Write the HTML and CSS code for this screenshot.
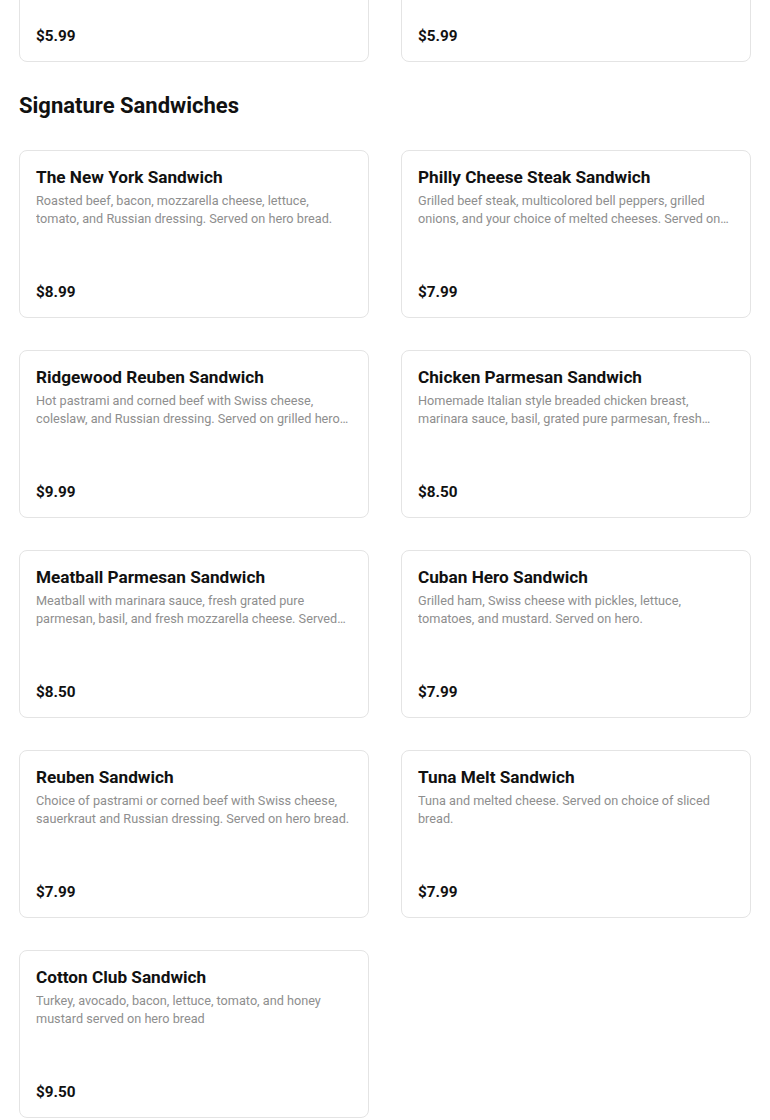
FILE: index.html
```html
<!DOCTYPE html>
<html lang="en">
  <head>
    <meta charset="UTF-8" />
    <meta name="viewport" content="width=device-width, initial-scale=1.0" />
    <title>Menu - Sandwiches</title>
    <link rel="stylesheet" href="styles.css">
  </head>
  <body>
    <div class="menu">
      <section class="menu-section menu-section--prev">
        <div class="item-grid">
          <div class="menu-item">
            <h3 class="item-name">Egg and Cheese Sandwich</h3>
            <p class="item-desc">Two eggs and American cheese served on a roll.</p>
            <div class="item-price">$5.99</div>
          </div>
          <div class="menu-item">
            <h3 class="item-name">Bacon, Egg and Cheese</h3>
            <p class="item-desc">Crispy bacon, eggs and American cheese served on a roll.</p>
            <div class="item-price">$5.99</div>
          </div>
        </div>
      </section>

      <section class="menu-section">
        <h2 class="section-title">Signature Sandwiches</h2>
        <div class="item-grid">
          <div class="menu-item">
            <h3 class="item-name">The New York Sandwich</h3>
            <p class="item-desc">Roasted beef, bacon, mozzarella cheese, lettuce, tomato, and Russian dressing. Served on hero bread.</p>
            <div class="item-price">$8.99</div>
          </div>
          <div class="menu-item">
            <h3 class="item-name">Philly Cheese Steak Sandwich</h3>
            <p class="item-desc">Grilled beef steak, multicolored bell peppers, grilled onions, and your choice of melted cheeses. Served on hero bread.</p>
            <div class="item-price">$7.99</div>
          </div>
          <div class="menu-item">
            <h3 class="item-name">Ridgewood Reuben Sandwich</h3>
            <p class="item-desc">Hot pastrami and corned beef with Swiss cheese, coleslaw, and Russian dressing. Served on grilled hero bread.</p>
            <div class="item-price">$9.99</div>
          </div>
          <div class="menu-item">
            <h3 class="item-name">Chicken Parmesan Sandwich</h3>
            <p class="item-desc">Homemade Italian style breaded chicken breast, marinara sauce, basil, grated pure parmesan, fresh mozzarella cheese. Served on hero.</p>
            <div class="item-price">$8.50</div>
          </div>
          <div class="menu-item">
            <h3 class="item-name">Meatball Parmesan Sandwich</h3>
            <p class="item-desc">Meatball with marinara sauce, fresh grated pure parmesan, basil, and fresh mozzarella cheese. Served on hero bread.</p>
            <div class="item-price">$8.50</div>
          </div>
          <div class="menu-item">
            <h3 class="item-name">Cuban Hero Sandwich</h3>
            <p class="item-desc">Grilled ham, Swiss cheese with pickles, lettuce, tomatoes, and mustard. Served on hero.</p>
            <div class="item-price">$7.99</div>
          </div>
          <div class="menu-item">
            <h3 class="item-name">Reuben Sandwich</h3>
            <p class="item-desc">Choice of pastrami or corned beef with Swiss cheese, sauerkraut and Russian dressing. Served on hero bread.</p>
            <div class="item-price">$7.99</div>
          </div>
          <div class="menu-item">
            <h3 class="item-name">Tuna Melt Sandwich</h3>
            <p class="item-desc">Tuna and melted cheese. Served on choice of sliced bread.</p>
            <div class="item-price">$7.99</div>
          </div>
          <div class="menu-item">
            <h3 class="item-name">Cotton Club Sandwich</h3>
            <p class="item-desc">Turkey, avocado, bacon, lettuce, tomato, and honey mustard served on hero bread</p>
            <div class="item-price">$9.50</div>
          </div>
        </div>
      </section>
    </div>
  </body>
</html>
```

FILE: styles.css
```css
* {
  margin: 0;
  padding: 0;
  box-sizing: border-box;
}

body {
  font-family: Roboto, "Liberation Sans", sans-serif;
  background: #ffffff;
  color: #111111;
  overflow: hidden;
}

.menu {
  padding: 0 19px;
  /* page is scrolled part way down */
  margin-top: -106px;
}

.menu-section--prev {
  margin-bottom: 30px;
}

.section-title {
  font-size: 22px;
  font-weight: 700;
  line-height: 28px;
  color: #111111;
  margin-bottom: 30px;
}

.item-grid {
  display: grid;
  grid-template-columns: 1fr 1fr;
  gap: 32px;
}

.menu-item {
  height: 168px;
  border: 1px solid #e4e4e4;
  border-radius: 8px;
  padding: 16px 16px 15px;
  display: flex;
  flex-direction: column;
  background: #ffffff;
}

.item-name {
  font-size: 17.2px;
  font-weight: 700;
  line-height: 20px;
  color: #111111;
  margin-bottom: 5px;
}

.item-desc {
  font-size: 12.7px;
  line-height: 18px;
  color: #8e8e8e;
  display: -webkit-box;
  -webkit-line-clamp: 2;
  -webkit-box-orient: vertical;
  overflow: hidden;
}

.item-price {
  margin-top: auto;
  font-size: 15.3px;
  font-weight: 700;
  line-height: 20px;
  color: #111111;
}
```
